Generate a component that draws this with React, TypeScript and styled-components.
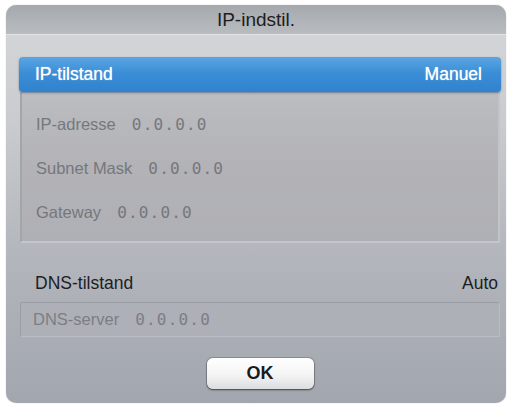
import React from "react";
import styled, { createGlobalStyle } from "styled-components";

const GlobalStyle = createGlobalStyle`
  body {
    margin: 0;
    background: #ffffff;
    font-family: "Liberation Sans", Arial, sans-serif;
  }
`;

const ADDRESS_FIELDS = [
  { label: "IP-adresse", value: "0.0.0.0" },
  { label: "Subnet Mask", value: "0.0.0.0" },
  { label: "Gateway", value: "0.0.0.0" },
];

const App = () => {
  return (
    <Page>
      <GlobalStyle />
      <Dialog>
        <TitleBar>IP-indstil.</TitleBar>
        <Body>
          <ModeRow>
            <span>IP-tilstand</span>
            <span>Manuel</span>
          </ModeRow>
          <FieldPanel>
            {ADDRESS_FIELDS.map((field) => (
              <Field key={field.label}>
                <span>{field.label}</span>
                <Address>{field.value}</Address>
              </Field>
            ))}
          </FieldPanel>
          <DnsRow>
            <span>DNS-tilstand</span>
            <span>Auto</span>
          </DnsRow>
          <DnsBox>
            <span>DNS-server</span>
            <Address>0.0.0.0</Address>
          </DnsBox>
          <Footer>
            <OkButton>OK</OkButton>
          </Footer>
        </Body>
      </Dialog>
    </Page>
  );
};

const Page = styled.div`
  width: 512px;
  height: 404px;
  padding: 5px 6px 1px 6px;
  box-sizing: border-box;
`;

const Dialog = styled.div`
  width: 500px;
  height: 398px;
  border-radius: 10px;
  overflow: hidden;
  display: flex;
  flex-direction: column;
  background: linear-gradient(180deg, #d6d7d9 0%, #c9cbce 30%, #b3b6bc 62%, #a2a6ae 100%);
  box-shadow: 0 0 1px rgba(0, 0, 0, 0.35);
`;

const TitleBar = styled.div`
  height: 30px;
  flex-shrink: 0;
  display: flex;
  align-items: center;
  justify-content: center;
  padding-top: 1px;
  box-sizing: border-box;
  font-size: 19px;
  color: #1e1e20;
  background: linear-gradient(180deg, #a5a8ad 0%, #b1b4b8 60%, #b9bcbf 100%);
  border-bottom: 1px solid #e2e3e5;
`;

const Body = styled.div`
  flex: 1;
  display: flex;
  flex-direction: column;
  padding: 22px 5px 0 13px;
`;

const ModeRow = styled.div`
  height: 35px;
  display: flex;
  align-items: center;
  justify-content: space-between;
  padding: 0 19px 0 16px;
  border-radius: 4px;
  color: #ffffff;
  font-size: 17.5px;
  text-shadow: 0 0 1px rgba(255, 255, 255, 0.8);
  background: linear-gradient(180deg, #5aa6e3 0%, #3b8ed6 45%, #2f82cc 100%);
  box-shadow: 0 1px 2px rgba(20, 60, 110, 0.5);
  position: relative;
  z-index: 1;
`;

const FieldPanel = styled.div`
  height: 151px;
  margin: 0 1px;
  padding: 10px 0 0 14px;
  box-sizing: border-box;
  display: flex;
  flex-direction: column;
  background: linear-gradient(180deg, #bcbdc0 0%, #b2b2b7 50%, #afb0b5 100%);
  border-left: 2px solid #a3a5aa;
  border-right: 2px solid #c2c4c8;
  border-bottom: 2px solid #c3c6cb;
`;

const Field = styled.div`
  height: 44px;
  display: flex;
  align-items: center;
  gap: 16px;
  color: #76777c;
  font-size: 16.5px;
`;

const Address = styled.span`
  font-family: "DejaVu Sans Mono", "Liberation Mono", monospace;
  font-size: 16px;
  letter-spacing: 1.2px;
`;

const DnsRow = styled.div`
  height: 38px;
  margin-top: 21px;
  display: flex;
  align-items: center;
  justify-content: space-between;
  padding: 0 3px 0 16px;
  color: #1d1e22;
  font-size: 17.5px;
`;

const DnsBox = styled.div`
  height: 35px;
  margin: 0 1px;
  padding: 0 0 0 12px;
  box-sizing: border-box;
  display: flex;
  align-items: center;
  gap: 16px;
  color: #7c7e84;
  font-size: 16.5px;
  background: #adb0b7;
  border: 1px solid #999ca3;
  border-right-color: #b9bcc2;
  border-bottom-color: #b9bcc2;
  border-radius: 2px;
`;

const Footer = styled.div`
  display: flex;
  justify-content: center;
  padding-top: 21px;
`;

const OkButton = styled.button`
  width: 107px;
  height: 31px;
  border: none;
  border-radius: 6px;
  font-family: "Liberation Sans", Arial, sans-serif;
  font-weight: bold;
  font-size: 18px;
  color: #1a1a1a;
  background: linear-gradient(180deg, #ffffff 0%, #f4f4f5 55%, #dcdde0 100%);
  box-shadow: 0 1px 2px rgba(0, 0, 0, 0.55), 0 0 0 1px #8c8f95;
  cursor: pointer;
`;

export default App;
